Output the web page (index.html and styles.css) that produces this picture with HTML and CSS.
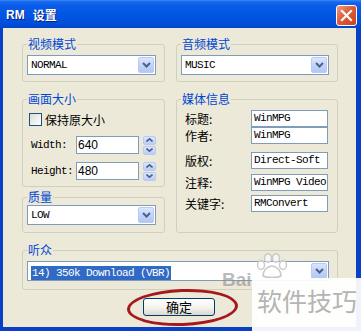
FILE: index.html
```html
<!DOCTYPE html>
<html>
<head>
<meta charset="utf-8">
<link rel="stylesheet" href="styles.css">
</head>
<body>
<div class="window">
  <div class="titlebar">
    <span class="title"><span class="t-rm">RM</span><span class="t-cn">设置</span></span>
    <span class="close"><svg width="19" height="19" viewBox="0 0 19 19"><path d="M5 5 L14 14 M14 5 L5 14" stroke="#fff" stroke-width="2.2" stroke-linecap="square"/></svg></span>
  </div>
  <div class="client">
    <div class="grid">
      <fieldset class="g g-video">
        <legend>视频模式</legend>
        <div class="combo"><span class="val mono">NORMAL</span><span class="dd"><svg width="9" height="6" viewBox="0 0 9 6"><path d="M1 1 L4.5 4.5 L8 1" fill="none" stroke="#4D6185" stroke-width="2"/></svg></span></div>
      </fieldset>
      <fieldset class="g g-audio">
        <legend>音频模式</legend>
        <div class="combo"><span class="val mono">MUSIC</span><span class="dd"><svg width="9" height="6" viewBox="0 0 9 6"><path d="M1 1 L4.5 4.5 L8 1" fill="none" stroke="#4D6185" stroke-width="2"/></svg></span></div>
      </fieldset>
      <fieldset class="g g-size">
        <legend>画面大小</legend>
        <div class="chk"><span class="box"></span><span>保持原大小</span></div>
        <div class="num-row first">
          <span class="nlbl mono">Width:</span>
          <div class="edit">640</div>
          <div class="spin">
            <span class="sb"><svg width="7" height="4" viewBox="0 0 7 4"><path d="M0.5 3.5 L3.5 0.8 L6.5 3.5" fill="none" stroke="#4D6185" stroke-width="1.6"/></svg></span>
            <span class="sb"><svg width="7" height="4" viewBox="0 0 7 4"><path d="M0.5 0.5 L3.5 3.2 L6.5 0.5" fill="none" stroke="#4D6185" stroke-width="1.6"/></svg></span>
          </div>
        </div>
        <div class="num-row second">
          <span class="nlbl mono">Height:</span>
          <div class="edit">480</div>
          <div class="spin">
            <span class="sb"><svg width="7" height="4" viewBox="0 0 7 4"><path d="M0.5 3.5 L3.5 0.8 L6.5 3.5" fill="none" stroke="#4D6185" stroke-width="1.6"/></svg></span>
            <span class="sb"><svg width="7" height="4" viewBox="0 0 7 4"><path d="M0.5 0.5 L3.5 3.2 L6.5 0.5" fill="none" stroke="#4D6185" stroke-width="1.6"/></svg></span>
          </div>
        </div>
      </fieldset>
      <fieldset class="g g-media">
        <legend>媒体信息</legend>
        <div class="mrow r1"><span class="mlbl">标题:</span><div class="medit mono">WinMPG</div></div>
        <div class="mrow r2"><span class="mlbl">作者:</span><div class="medit mono">WinMPG</div></div>
        <div class="mrow r3"><span class="mlbl">版权:</span><div class="medit mono">Direct-Soft</div></div>
        <div class="mrow r4"><span class="mlbl">注释:</span><div class="medit mono">WinMPG Video</div></div>
        <div class="mrow r5"><span class="mlbl">关键字:</span><div class="medit mono">RMConvert</div></div>
      </fieldset>
      <fieldset class="g g-quality">
        <legend>质量</legend>
        <div class="combo"><span class="val mono">LOW</span><span class="dd"><svg width="9" height="6" viewBox="0 0 9 6"><path d="M1 1 L4.5 4.5 L8 1" fill="none" stroke="#4D6185" stroke-width="2"/></svg></span></div>
      </fieldset>
    </div>
    <fieldset class="g g-aud">
      <legend>听众</legend>
      <div class="combo"><span class="val"><span class="sel mono">14) 350k Download (VBR)</span></span><span class="dd"><svg width="9" height="6" viewBox="0 0 9 6"><path d="M1 1 L4.5 4.5 L8 1" fill="none" stroke="#4D6185" stroke-width="2"/></svg></span></div>
    </fieldset>
    <div class="btn-row"><button class="btn">确定</button></div>
  </div>

  <div class="ellipse"></div>
  <div class="wm-bai">Bai</div>
  <svg class="wm-paw" width="34" height="26" viewBox="0 0 34 26">
    <g fill="rgba(255,255,255,0.6)" stroke="#C9C9C9" stroke-width="1.4">
      <ellipse cx="6" cy="12" rx="3.5" ry="4.5"/>
      <ellipse cx="13" cy="5" rx="3.5" ry="4.2"/>
      <ellipse cx="21" cy="5" rx="3.5" ry="4.2"/>
      <ellipse cx="28" cy="12" rx="3.5" ry="4.5"/>
      <path d="M8 23 C8 17 13 13 17 13 C21 13 26 17 26 23 C22 25 12 25 8 23 Z"/>
    </g>
  </svg>
  <div class="wm-box">软件技巧</div>
</div>
</body>
</html>
```

FILE: styles.css
```css
* { box-sizing: border-box; }
html, body { margin: 0; padding: 0; }
body {
  width: 361px;
  height: 331px;
  overflow: hidden;
  background: #fff;
  font-family: "Noto Sans CJK SC", "Liberation Sans", sans-serif;
  font-size: 12px;
  color: #000;
}

.window {
  position: relative;
  width: 361px;
  height: 331px;
  display: flex;
  flex-direction: column;
  background: #0A3FC8;
}

.titlebar {
  height: 28px;
  flex: none;
  display: flex;
  align-items: flex-start;
  padding: 0 4px 0 6px;
  background: linear-gradient(180deg, #3D8AF7 0px, #1565EC 2px, #0A5CE8 6px, #0057E4 14px, #0050DC 22px, #0046CD 28px);
  color: #fff;
}
.title {
  display: flex;
  align-items: center;
  gap: 8px;
  margin-top: 8px;
  font-weight: bold;
  text-shadow: 1px 1px 0 #0B1D84;
}
.t-rm { font-family: "Liberation Sans", sans-serif; font-size: 12px; line-height: 14px; }
.t-cn { font-size: 12px; line-height: 14px; }
.close {
  margin-left: auto;
  margin-top: 5px;
  width: 21px;
  height: 21px;
  border: 1px solid #fff;
  border-radius: 3px;
  background: linear-gradient(135deg, #EE9A7E 0%, #DE5D3C 45%, #C8401F 100%);
  display: flex;
  align-items: center;
  justify-content: center;
}

.client {
  flex: 1;
  margin: 0 5px 4px 3px;
  background: #ECE9D8;
  padding: 9px 18px 0 19px;
}

.grid {
  display: grid;
  grid-template-columns: 143px 162px;
  column-gap: 11px;
  align-items: start;
}

.g {
  margin: 0;
  min-width: 0;
  border: 1px solid #D0D0BF;
  border-radius: 3px;
  padding: 4px 8px 6px 4px;
}
.g legend {
  padding: 0 1px;
  font-size: 12px;
  line-height: 14px;
  color: #0046D5;
}

.g-video { grid-area: 1 / 1; }
.g-audio { grid-area: 1 / 2; }
.g-size { grid-area: 2 / 1; margin-top: 10px; padding-top: 7px; }
.g-quality { grid-area: 3 / 1; margin-top: 3px; padding-top: 1px; padding-bottom: 7px; }
.g-media { grid-area: 2 / 2 / 4 / 3; margin-top: 10px; align-self: stretch; }
.g-aud { margin-top: 10px; padding-bottom: 8px; }

.mono {
  font-family: "Liberation Mono", monospace;
  font-size: 11px;
  letter-spacing: -0.6px;
}

.combo {
  display: flex;
  align-items: center;
  height: 20px;
  border: 1px solid #7F9DB9;
  background: #fff;
  padding: 1px;
}
.combo .val {
  flex: 1;
  padding-left: 2px;
  white-space: nowrap;
  overflow: hidden;
}
.dd {
  width: 16px;
  height: 16px;
  flex: none;
  border: 1px solid #B7CBF4;
  border-radius: 2px;
  background: linear-gradient(180deg, #DCE6FD 0%, #C3D4FA 50%, #B2C7F6 100%);
  display: flex;
  align-items: center;
  justify-content: center;
}
.sel {
  display: inline-block;
  background: #316AC5;
  color: #fff;
  line-height: 14px;
  padding: 0 1px;
}

.chk {
  display: flex;
  align-items: center;
  gap: 3px;
  height: 13px;
  margin-left: 2px;
  line-height: 13px;
}
.box {
  width: 13px;
  height: 13px;
  border: 1px solid #1C5180;
  background: linear-gradient(135deg, #DCDCD5 0%, #FFFFFF 100%);
}

.num-row {
  display: flex;
  align-items: center;
  height: 18px;
}
.num-row.first { margin-top: 10px; }
.num-row.second { margin-top: 8px; }
.nlbl { width: 45px; margin-left: 4px; }
.edit {
  width: 63px;
  height: 18px;
  border: 1px solid #7F9DB9;
  background: #fff;
  font-family: "Liberation Sans", sans-serif;
  font-size: 12px;
  line-height: 16px;
  padding-left: 1px;
}
.spin {
  margin-left: 4px;
  width: 13px;
  height: 19px;
  display: flex;
  flex-direction: column;
  gap: 1px;
}
.sb {
  flex: 1;
  border: 1px solid #B7CBF4;
  border-radius: 2px;
  background: linear-gradient(180deg, #DCE6FD 0%, #B9CCF7 100%);
  display: flex;
  align-items: center;
  justify-content: center;
}

.mrow {
  display: flex;
  align-items: center;
  height: 17px;
}
.mrow.r3 { margin-top: 8px; }
.mrow.r4 { margin-top: 5px; }
.mrow.r5 { margin-top: 4px; }
.mlbl { width: 66px; margin-left: 4px; font-size: 12px; line-height: 14px; }
.medit {
  width: 77px;
  height: 17px;
  border: 1px solid #7F9DB9;
  background: #fff;
  line-height: 15px;
  padding-left: 2px;
  white-space: nowrap;
  overflow: hidden;
}

.btn-row {
  display: flex;
  justify-content: center;
  margin-top: 8px;
}
.btn {
  margin-left: -2px;
  width: 72px;
  height: 18px;
  padding: 0;
  border: 1px solid #003C74;
  border-radius: 3px;
  background: linear-gradient(180deg, #FFFFFF 0%, #F4F3EE 55%, #DCD7CB 100%);
  font-family: "Noto Sans CJK SC", sans-serif;
  font-size: 13px;
  line-height: 16px;
  color: #000;
}

.ellipse {
  position: absolute;
  left: 127px;
  top: 289px;
  width: 111px;
  height: 37px;
  border: 3px solid #A5181B;
  border-radius: 50%;
  transform: rotate(-2deg);
}

.wm-bai {
  position: absolute;
  left: 222px;
  top: 270px;
  font-family: "Liberation Sans", sans-serif;
  font-weight: bold;
  font-size: 19px;
  line-height: 19px;
  color: rgba(140, 140, 140, 0.6);
}
.wm-paw {
  position: absolute;
  left: 255px;
  top: 253px;
}
.wm-box {
  position: absolute;
  left: 252px;
  top: 278px;
  width: 109px;
  height: 53px;
  background: rgba(255, 255, 255, 0.94);
  color: #B4B4B4;
  font-size: 25px;
  line-height: 25px;
  padding: 10px 0 0 5px;
  white-space: nowrap;
}
```
